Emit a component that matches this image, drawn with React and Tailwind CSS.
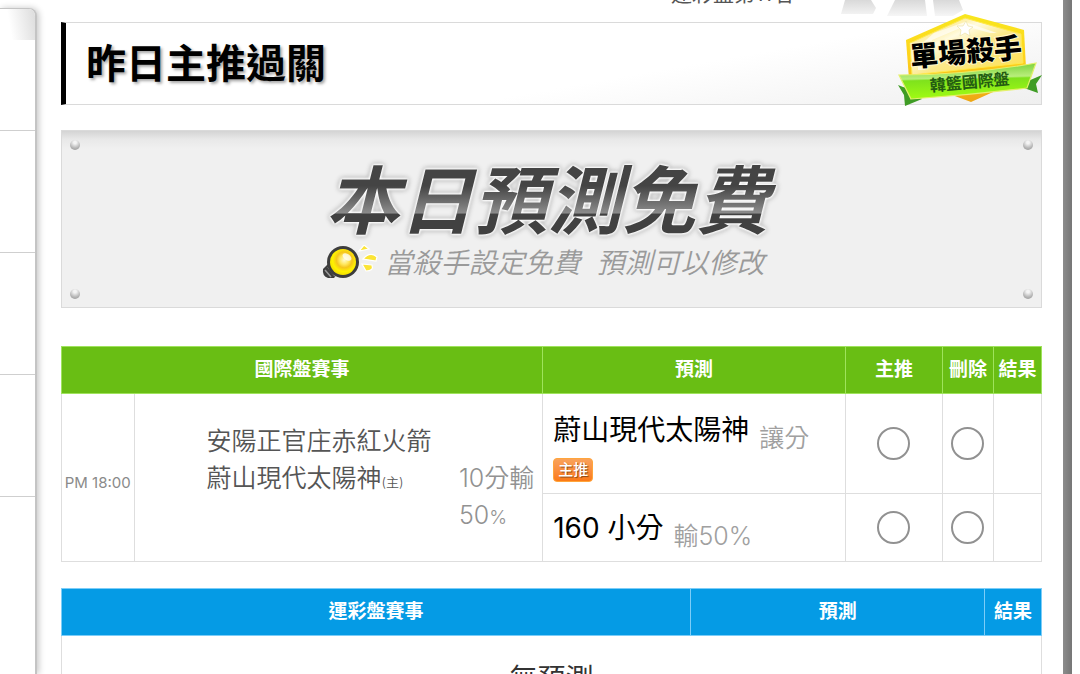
import clsx from "clsx";

const NAV_ITEMS = ["首頁", "賽事", "預測", "排行", "討論"];

const PREDICTIONS = [
  { id: "spread", pick: "蔚山現代太陽神", note: "讓分", main: true },
  { id: "total", pick: "160 小分", note: "輸50%", main: false },
];

function SideNav() {
  return (
    <nav className="mt-2 w-[37px] shrink-0 overflow-hidden rounded-tr-lg border-t border-r-2 border-[#c4c4c4] bg-white shadow-[2px_0_6px_rgba(0,0,0,0.22)]">
      {NAV_ITEMS.map((item, i) => (
        <a
          key={item}
          href="#"
          aria-label={item}
          className={clsx(
            "block h-[122px] border-[#cfcfcf] not-last:border-b",
            i === 0 && "bg-[linear-gradient(80deg,#fff_30%,#dcdcdc)] bg-[length:100%_31px] bg-no-repeat"
          )}
        />
      ))}
    </nav>
  );
}

function KillerBadge() {
  return (
    <div className="absolute -top-[10px] -right-px">
      <svg width="148" height="96" viewBox="0 0 148 96" role="img" aria-label="單場殺手 韓籃國際盤">
        <defs>
          <linearGradient id="hex" x1="0" y1="0" x2="0" y2="1">
            <stop offset="0" stopColor="#f8e71e" />
            <stop offset="0.5" stopColor="#ffd21c" />
            <stop offset="1" stopColor="#eda513" />
          </linearGradient>
          <linearGradient id="hexIn" x1="0" y1="0" x2="1" y2="1">
            <stop offset="0" stopColor="#fbd41f" />
            <stop offset="0.35" stopColor="#fffbe0" />
            <stop offset="0.55" stopColor="#fbe88a" />
            <stop offset="1" stopColor="#fde04c" />
          </linearGradient>
          <linearGradient id="ribbon" x1="0" y1="0" x2="0.1" y2="1">
            <stop offset="0" stopColor="#6ccb2c" />
            <stop offset="0.45" stopColor="#b9ee7c" />
            <stop offset="0.5" stopColor="#7fe21d" />
            <stop offset="1" stopColor="#a0fb12" />
          </linearGradient>
        </defs>
        <path d="M4 72 L9 74 L17 76 L28 86 L11 93 L10 82 Z" fill="#3f9c25" />
        <path d="M134 68 L148 62 L142 71 L144 80 L130 75 Z" fill="#3f9c25" />
        <path d="M71 1 L130 17 L132 55 L132 64 L77 89 L15 66 L12 27 Z" fill="url(#hex)" />
        <path d="M71 5 L127 21 L129 50 L18 62 L16 30 Z" fill="url(#hexIn)" stroke="#ffe94b" />
        <path d="M40 20 L71 9 L103 20 L96 20 L71 13 L38 27 L31 57 L24 57 L24 34 Z" fill="#fff" opacity="0.65" />
        <path d="M72 8 l2 5 5 1 -4 3 1 6 -5 -3 -5 3 1 -6 -4 -4 6 0 z" fill="#fff" stroke="#eadfa0" strokeWidth="0.6" />
        <path d="M5 62 Q75 62 142 50 L133 75 Q76 82 17 86 Z" fill="url(#ribbon)" stroke="#e4f06c" strokeWidth="1.2" />
        <g fontFamily="'Noto Sans CJK TC', sans-serif" textAnchor="middle" transform="rotate(-5 74 50)">
          <text x="73" y="49" fontSize="28" fontWeight="900" fill="#000" stroke="#fff6c8" strokeWidth="2" paintOrder="stroke">單場殺手</text>
          <text x="74" y="75" fontSize="16" fontWeight="700" fill="#245c12">韓籃國際盤</text>
        </g>
      </svg>
    </div>
  );
}

function Bulb() {
  return (
    <svg width="58" height="36" viewBox="0 0 58 36" aria-hidden="true">
      <defs>
        <radialGradient id="glass" cx="0.55" cy="0.42" r="0.6">
          <stop offset="0" stopColor="#fffbd0" />
          <stop offset="0.3" stopColor="#ffe65a" />
          <stop offset="0.5" stopColor="#f5c51c" />
          <stop offset="0.75" stopColor="#fff200" />
          <stop offset="1" stopColor="#f0dc00" />
        </radialGradient>
      </defs>
      <path d="M6 19 L1 24 Q0 31 6 33 L12 33 L16 28 Z" fill="#3d3d3d" />
      <path d="M3 25 L9 32 M6 22 L13 31" stroke="#999" strokeWidth="1.5" />
      <circle cx="21" cy="17" r="16" fill="#3d3d3d" />
      <circle cx="21" cy="17" r="13" fill="url(#glass)" />
      <ellipse cx="25" cy="12" rx="5" ry="3" fill="#fff" opacity="0.75" transform="rotate(35 25 12)" />
      <g fill="#fbe436" stroke="#fff" strokeWidth="1.2">
        <path d="M37 6 L42 0 L47 4 Z" />
        <path d="M41 14 Q48 6 55 12 L54 16 Z" />
        <path d="M40 19 L50 20 Q52 26 44 26 Z" />
      </g>
    </svg>
  );
}

function Screw({ className }) {
  return (
    <span
      className={clsx(
        "absolute size-[10px] rounded-full bg-[radial-gradient(circle_at_50%_25%,#f4f4f4_15%,#b8b8b8_60%,#909090)]",
        className
      )}
    />
  );
}

function FreeBanner() {
  return (
    <section className="relative mt-[25px] flex h-[178px] flex-col items-center border border-[#dadada] bg-[linear-gradient(#d4d4d4,#e8e8e8_8px,#f0f0f0_18px)] pt-8">
      <Screw className="top-[9px] left-2" />
      <Screw className="top-[9px] right-2" />
      <Screw className="bottom-2 left-2" />
      <Screw className="right-2 bottom-2" />
      <h2 className="mr-2 [filter:drop-shadow(0_0_1px_#fff)_drop-shadow(0_0_1px_#fff)_drop-shadow(0_0_1px_#fff)_drop-shadow(0_0_2px_#999)]">
        <span className="block bg-[linear-gradient(#444_30%,#8c8c8c_66%,#414141_67%)] bg-clip-text px-3 text-[74px] leading-[76px] font-bold text-transparent italic">
          本日預測免費
        </span>
      </h2>
      <div className="mt-1 mr-4 flex items-center gap-1">
        <Bulb />
        <p className="text-[28px] leading-10 font-[350] text-[#9a9a9a] italic">
          當殺手設定免費<span className="ml-4">預測可以修改</span>
        </p>
      </div>
    </section>
  );
}

function GameTable() {
  const th = "h-[47px] border border-[#9fe35c] px-0 pt-px pb-0 text-center text-[19px] font-bold text-white";
  const td = "border border-[#dedede] p-0";

  return (
    <table className="mt-[38px] w-full table-fixed border-collapse">
      <colgroup>
        <col className="w-[7.4%]" />
        <col className="w-[41.7%]" />
        <col className="w-[30.9%]" />
        <col className="w-[9.9%]" />
        <col className="w-[5.2%]" />
        <col className="w-[4.9%]" />
      </colgroup>
      <thead className="bg-[#69be14]">
        <tr>
          <th colSpan={2} className={th}>國際盤賽事</th>
          <th className={th}>預測</th>
          <th className={th}>主推</th>
          <th className={th}>刪除</th>
          <th className={th}>結果</th>
        </tr>
      </thead>
      <tbody>
        {PREDICTIONS.map((row, i) => (
          <tr key={row.id} className={i === 0 ? "h-[100px]" : "h-[68px]"}>
            {i === 0 && (
              <>
                <td rowSpan={2} className={clsx(td, "pt-3 text-center text-[15px] whitespace-nowrap text-[#8a8a8a]")}>
                  PM 18:00
                </td>
                <td rowSpan={2} className={clsx(td, "pt-1")}>
                  <div className="flex justify-between pr-2 pl-[72px] text-[25px] leading-[37px] font-[350]">
                    <div className="text-[#555]">
                      <p>安陽正官庄赤紅火箭</p>
                      <p>蔚山現代太陽神<small className="text-[13px]">(主)</small></p>
                    </div>
                    <div className="mt-[37px] text-[#929292]">
                      <p>10分輸</p>
                      <p>50<small className="text-[19px]">%</small></p>
                    </div>
                  </div>
                </td>
              </>
            )}
            <td className={clsx(td, "pl-[10px]", row.main && "pb-1")}>
              <div className="flex items-center gap-[10px] leading-10">
                <span className="text-[28px] text-black">{row.pick}</span>
                <span className="pt-4 text-[25px] font-[350] text-[#a0a0a0]">{row.note}</span>
              </div>
              {row.main && (
                <span className="block h-6 w-10 rounded-sm border border-[#ffa53c] bg-linear-to-b from-[#f9a25a] to-[#fb7a14] text-center text-[15px] leading-[22px] font-medium text-white [text-shadow:1px_1px_1px_#8a4512]">
                  主推
                </span>
              )}
            </td>
            {["主推", "刪除"].map((action) => (
              <td key={action} className={clsx(td, "text-center")}>
                <input
                  type="radio"
                  name={action}
                  aria-label={`${action} ${row.pick}`}
                  className="size-[33px] appearance-none rounded-full border-2 border-[#919191] bg-white align-middle"
                />
              </td>
            ))}
            <td className={td} />
          </tr>
        ))}
      </tbody>
    </table>
  );
}

function LotteryTable() {
  const th = "h-[47px] border border-[#7ccdf8] px-0 pt-px pb-0 text-center text-[19px] font-bold text-white";

  return (
    <table className="mt-[26px] w-full table-fixed border-collapse">
      <colgroup>
        <col className="w-[64.2%]" />
        <col className="w-[30%]" />
        <col className="w-[5.8%]" />
      </colgroup>
      <thead className="bg-[#059be5]">
        <tr>
          <th className={th}>運彩盤賽事</th>
          <th className={th}>預測</th>
          <th className={th}>結果</th>
        </tr>
      </thead>
      <tbody>
        <tr className="h-[86px]">
          <td colSpan={3} className="border border-[#dedede] text-center text-[28px] text-[#333]">無預測</td>
        </tr>
      </tbody>
    </table>
  );
}

export default function App() {
  return (
    <div className="flex h-screen overflow-hidden bg-white font-['Inter','Noto_Sans_CJK_TC',sans-serif]">
      <SideNav />
      <main className="min-w-0 flex-1 pr-[21px] pl-6">
        {/* Tail of the ranking block above the title */}
        <div className="flex h-[22px] items-start justify-end overflow-hidden">
          <p className="-mt-[18px] mr-12 text-[21px] leading-6 text-[#555]">運彩盤第11名</p>
          <svg width="124" height="16" viewBox="0 0 124 16" className="mr-[77px]" aria-hidden="true">
            <defs>
              <linearGradient id="fade" x1="0" y1="0" x2="0" y2="1">
                <stop offset="0" stopColor="#d9d9d9" />
                <stop offset="1" stopColor="#f6f6f6" />
              </linearGradient>
            </defs>
            <path d="M4 0 H30 L35 8 L32 14 H0 Z M54 0 H84 L86 16 H46 Z M92 0 H118 L122 10 L112 16 H94 Z" fill="url(#fade)" />
          </svg>
        </div>

        <header className="relative flex h-[83px] items-center border border-l-[5px] border-[#dadada] border-l-black bg-[linear-gradient(170deg,#fff_60%,#efefef)] pl-5">
          <h1 className="text-[40px] leading-none font-bold text-black [text-shadow:2px_2px_3px_rgba(0,0,0,0.35)]">
            昨日主推過關
          </h1>
          <KillerBadge />
        </header>

        <FreeBanner />
        <GameTable />
        <LotteryTable />
      </main>
      <div className="mr-2 w-[9px] shrink-0 bg-linear-to-r from-[#8c8c8c] to-[#767676]" />
    </div>
  );
}
